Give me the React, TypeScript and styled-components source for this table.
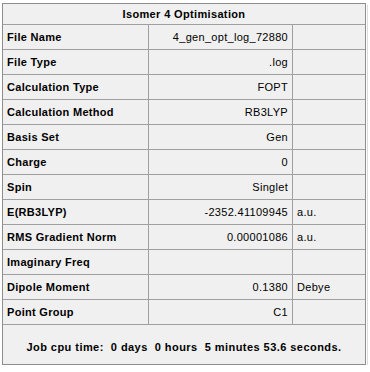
import React, { FC } from "react";
import styled, { createGlobalStyle } from "styled-components";

interface ResultRow {
  label: string;
  value: string;
  unit?: string;
}

const rows: ResultRow[] = [
  { label: "File Name", value: "4_gen_opt_log_72880" },
  { label: "File Type", value: ".log" },
  { label: "Calculation Type", value: "FOPT" },
  { label: "Calculation Method", value: "RB3LYP" },
  { label: "Basis Set", value: "Gen" },
  { label: "Charge", value: "0" },
  { label: "Spin", value: "Singlet" },
  { label: "E(RB3LYP)", value: "-2352.41109945", unit: "a.u." },
  { label: "RMS Gradient Norm", value: "0.00001086", unit: "a.u." },
  { label: "Imaginary Freq", value: "" },
  { label: "Dipole Moment", value: "0.1380", unit: "Debye" },
  { label: "Point Group", value: "C1" },
];

const GlobalStyle = createGlobalStyle`
  html, body {
    margin: 0;
    padding: 0;
    background: #ffffff;
  }
  body {
    font-family: "Liberation Sans", Arial, sans-serif;
    font-size: 11px;
    color: #000;
  }
`;

const Page = styled.div`
  padding: 3px 0 0 2px;
`;

const Panel = styled.div`
  width: 362px;
  border: 1px solid #8e8e8e;
  background: #f0f0f0;
  box-shadow: 1px 1px 0 #ffffff, 2px 2px 0 #dcdcdc;
`;

const Grid = styled.div`
  display: grid;
  grid-template-columns: 145px 143px 72px;
  column-gap: 1px;
  row-gap: 1px;
  background: #a0a0a0;
  border-bottom: 1px solid #a0a0a0;
`;

const Header = styled.div`
  grid-column: 1 / -1;
  height: 20px;
  display: flex;
  align-items: center;
  justify-content: center;
  background: #f0f0f0;
  font-weight: bold;
  letter-spacing: 0.35px;
`;

const Cell = styled.div<{ $align?: "left" | "right"; $bold?: boolean }>`
  height: 24px;
  display: flex;
  align-items: center;
  justify-content: ${(p) => (p.$align === "right" ? "flex-end" : "flex-start")};
  padding: 0 4px 0 4px;
  background: #f0f0f0;
  font-weight: ${(p) => (p.$bold ? "bold" : "normal")};
  letter-spacing: 0.3px;
  white-space: nowrap;
  overflow: hidden;
`;

const Footer = styled.div`
  height: 39px;
  display: flex;
  justify-content: center;
  align-items: center;
  padding-top: 4px;
  box-sizing: border-box;
  font-weight: bold;
  letter-spacing: 0.45px;
  white-space: pre;
`;

const App: FC = () => {
  return (
    <>
      <GlobalStyle />
      <Page>
        <Panel>
          <Grid>
            <Header>Isomer 4 Optimisation</Header>
            {rows.map((row) => (
              <React.Fragment key={row.label}>
                <Cell $bold>{row.label}</Cell>
                <Cell $align="right">{row.value}</Cell>
                <Cell>{row.unit ?? ""}</Cell>
              </React.Fragment>
            ))}
          </Grid>
          <Footer>{"Job cpu time:  0 days  0 hours  5 minutes 53.6 seconds."}</Footer>
        </Panel>
      </Page>
    </>
  );
};

export default App;
